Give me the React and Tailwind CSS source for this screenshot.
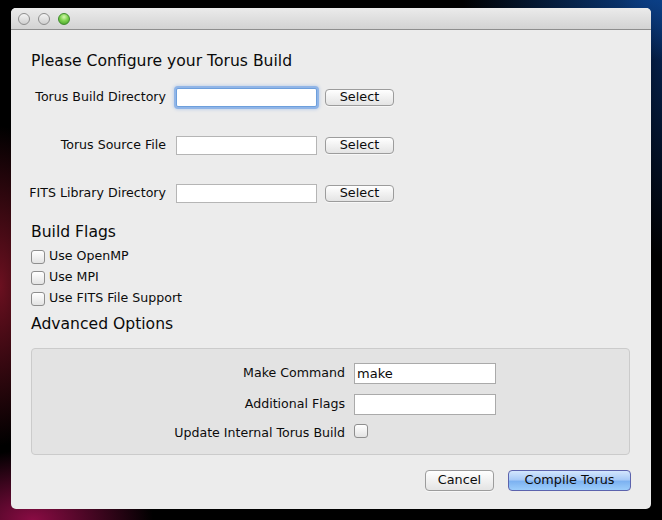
function TrafficLight({ color }) {
  return (
    <span
      className={
        color === "green"
          ? "h-[12px] w-[12px] rounded-full border border-[#3f8a2c] bg-[radial-gradient(circle_at_50%_30%,#d6f7b0_0%,#7fd34f_45%,#3f9a24_100%)]"
          : "h-[12px] w-[12px] rounded-full border border-[#8d8d8d] bg-[linear-gradient(#f4f4f4,#cfcfcf)]"
      }
    />
  );
}

function MacButton({ children, className = "" }) {
  return (
    <button
      className={
        "flex h-[17px] w-[69px] items-center justify-center rounded-[4px] border border-[#9c9c9c] bg-[linear-gradient(#ffffff,#f1f1f1_50%,#e4e4e4)] text-[12.8px] leading-none text-[#0c0c0c] shadow-[0_1px_0_rgba(255,255,255,0.6)] " +
        className
      }
    >
      {children}
    </button>
  );
}

function Checkbox() {
  return (
    <span className="h-[14px] w-[14px] shrink-0 rounded-[3px] border border-[#8e8e8e] bg-[linear-gradient(#ffffff,#e3e3e3)]" />
  );
}

function PathRow({ label, focused }) {
  return (
    <div className="flex h-[24px] items-center">
      <span className="w-[155px] pt-[1px] text-right text-[12.6px] text-[#0c0c0c]">{label}</span>
      <input
        className={
          "ml-[10px] h-[19px] w-[141px] border bg-white px-1 text-[12.6px] outline-none " +
          (focused
            ? "rounded-[2px] border-[#6d9fdc] shadow-[0_0_0_2px_rgba(125,170,230,0.75),0_0_3px_3px_rgba(125,170,230,0.35)]"
            : "border-[#b5b5b5]")
        }
        defaultValue=""
      />
      <MacButton className="ml-[8px]">Select</MacButton>
    </div>
  );
}

function FlagRow({ label }) {
  return (
    <label className="flex h-[21px] items-center gap-[4px]">
      <Checkbox />
      <span className="text-[12.6px] text-[#0c0c0c]">{label}</span>
    </label>
  );
}

function AdvancedRow({ label, children }) {
  return (
    <div className="flex h-[21px] items-center">
      <span className="w-[313px] text-right text-[12.6px] text-[#0c0c0c]">{label}</span>
      <div className="ml-[9px] flex items-center">{children}</div>
    </div>
  );
}

export default function App() {
  return (
    <div className="h-[520px] w-[662px] overflow-hidden bg-black bg-[radial-gradient(ellipse_60px_160px_at_0%_55%,#6b1020_0%,transparent_100%),radial-gradient(ellipse_120px_70px_at_5%_100%,#8a0c44_0%,transparent_100%),radial-gradient(ellipse_200px_60px_at_100%_0%,#0b3f86_0%,transparent_100%),radial-gradient(ellipse_40px_260px_at_100%_0%,#06285c_0%,transparent_100%)] pl-[11px] pt-[8px] font-['DejaVu_Sans',sans-serif]">
      <div className="flex h-[501px] w-[640px] flex-col overflow-hidden rounded-[5px] bg-[#ececec]">
        <div className="flex h-[22px] shrink-0 items-center gap-[8px] border-b border-[#8e8e8e] bg-[linear-gradient(#ebebeb,#d3d3d3)] pl-[7px] pt-[1px]">
          <TrafficLight />
          <TrafficLight />
          <TrafficLight color="green" />
        </div>

        <div className="flex flex-col px-[20px] pt-[21px]">
          <h1 className="h-[20px] text-[15.6px] leading-[20px] text-[#0a0a0a]">
            Please Configure your Torus Build
          </h1>

          <div className="mt-[14px] flex flex-col gap-[24px] -ml-[20px]">
            <PathRow label="Torus Build Directory" focused />
            <PathRow label="Torus Source File" />
            <PathRow label="FITS Library Directory" />
          </div>

          <h2 className="mt-[17px] h-[20px] text-[15.6px] leading-[20px] text-[#0a0a0a]">Build Flags</h2>
          <div className="mt-[4px] flex flex-col">
            <FlagRow label="Use OpenMP" />
            <FlagRow label="Use MPI" />
            <FlagRow label="Use FITS File Support" />
          </div>

          <h2 className="mt-[5px] h-[20px] text-[15.6px] leading-[20px] text-[#0a0a0a]">Advanced Options</h2>

          <div className="mt-[14px] flex h-[107px] w-[599px] flex-col rounded-[4px] border border-[#cbcbcb] bg-[#e3e3e3] pt-[14px]">
            <AdvancedRow label="Make Command">
              <input
                className="h-[21px] w-[142px] border border-[#aaaaaa] bg-white px-[2px] text-[13px] text-[#0a0a0a] outline-none"
                defaultValue="make"
              />
            </AdvancedRow>
            <div className="mt-[10px]">
              <AdvancedRow label="Additional Flags">
                <input
                  className="h-[21px] w-[142px] border border-[#aaaaaa] bg-white px-[2px] text-[13px] outline-none"
                  defaultValue=""
                />
              </AdvancedRow>
            </div>
            <div className="mt-[8px]">
              <AdvancedRow label="Update Internal Torus Build">
                <span className="-mt-[6px] flex">
                  <Checkbox />
                </span>
              </AdvancedRow>
            </div>
          </div>

          <div className="mt-[15px] flex justify-end gap-[14px]">
            <MacButton className="h-[21px] w-[69px]">Cancel</MacButton>
            <button className="flex h-[21px] w-[123px] items-center justify-center rounded-[4px] border border-[#5c63ad] bg-[linear-gradient(#d3e6fd,#a9cbf8_45%,#7db2f1_55%,#9ccdfb)] text-[12.8px] leading-none text-[#0c0c0c]">
              Compile Torus
            </button>
          </div>
        </div>
      </div>
    </div>
  );
}
